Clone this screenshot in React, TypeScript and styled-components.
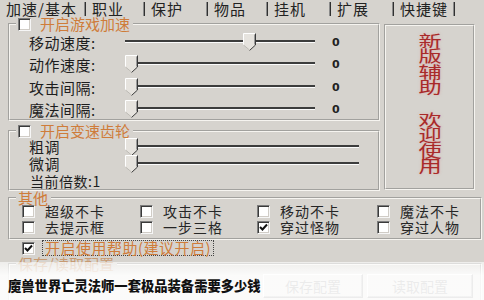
import React from "react";
import styled, { createGlobalStyle } from "styled-components";

const FONT = `"Noto Sans CJK SC", "Noto Sans", sans-serif`;

const GlobalStyle = createGlobalStyle`
  html, body {
    margin: 0;
    padding: 0;
    background: #d6d3ce;
  }
  body {
    font-family: ${FONT};
  }
`;

const Window = styled.div`
  position: relative;
  width: 484px;
  height: 300px;
  overflow: hidden;
  background: #d6d3ce;
  color: #1e1e1e;
  font-family: ${FONT};
`;

const TabBar = styled.div`
  display: flex;
  height: 17px;
`;

const Tab = styled.div<{ $w: number }>`
  position: relative;
  box-sizing: border-box;
  width: ${({ $w }) => $w}px;
  height: 17px;
  padding: 1px 0 0 6px;
  font-size: 15px;
  line-height: 16px;
  letter-spacing: 1px;
  color: #222;
  white-space: nowrap;

  &::after {
    content: "";
    position: absolute;
    right: 0;
    top: 2px;
    bottom: 1px;
    width: 1px;
    background: #303030;
    box-shadow: -1px 0 0 #8a8a8a;
  }
`;

const Body = styled.div`
  padding: 0 2px 0 8px;
`;

const Top = styled.div`
  display: flex;
  gap: 4px;
`;

const LeftCol = styled.div`
  display: flex;
  flex-direction: column;
  width: 372px;
`;

const Group = styled.fieldset<{ $mt?: number }>`
  margin: ${({ $mt }) => $mt ?? 0}px 0 0 0;
  padding: 0;
  min-width: 0;
  border: 2px groove #f6f4f0;
`;

const Legend = styled.legend<{ $muted?: boolean }>`
  display: flex;
  align-items: center;
  gap: 9px;
  margin-left: 6px;
  padding: 0 3px 0 2px;
  font-size: 15px;
  line-height: 14px;
  height: 14px;
  color: ${({ $muted }) => ($muted ? "#c79a72" : "#cf7c3a")};
  white-space: nowrap;
`;

const SliderRow = styled.div<{ $h: number; $label: number }>`
  display: flex;
  align-items: center;
  height: ${({ $h }) => $h}px;
  padding-left: 19px;

  & > span:first-child {
    width: ${({ $label }) => $label}px;
    font-size: 15px;
    letter-spacing: 0.5px;
    white-space: nowrap;
  }
`;

const PlainRow = styled.div<{ $h: number }>`
  display: flex;
  align-items: center;
  height: ${({ $h }) => $h}px;
  padding-left: 20px;
  font-size: 14px;
  letter-spacing: 0.5px;
`;

const Track = styled.div<{ $w: number }>`
  position: relative;
  width: ${({ $w }) => $w}px;
  height: 20px;

  &::before {
    content: "";
    position: absolute;
    left: 0;
    right: 0;
    top: 8px;
    height: 2px;
    background: #3c3c3c;
    border-bottom: 1px solid #fbfbfb;
  }
`;

const ThumbSvg = styled.svg`
  position: absolute;
  top: 1px;
`;

const Value = styled.span`
  margin-left: 17px;
  font-family: "DejaVu Sans", sans-serif;
  font-weight: bold;
  font-size: 11px;
  color: #222;
`;

const Banner = styled.div`
  box-sizing: border-box;
  margin-top: 7px;
  width: 91px;
  height: 166px;
  border: 2px groove #f6f4f0;
  padding-top: 7px;
  display: flex;
  flex-direction: column;
  align-items: center;
  gap: 18px;
`;

const RedWord = styled.div`
  writing-mode: vertical-rl;
  font-size: 16px;
  line-height: 16px;
  letter-spacing: -0.7px;
  color: #a82a2a;
  text-shadow: 0 0 2px rgba(230, 120, 120, 0.5);
  transform: scaleX(1.45);
`;

const CheckGrid = styled.div`
  display: grid;
  grid-template-columns: 118px 117px 120px 1fr;
  grid-auto-rows: 16px;
  padding: 0 0 3px 12px;
  margin-top: -2px;
  font-size: 14px;
  letter-spacing: 1px;
`;

const CheckItem = styled.label`
  display: flex;
  align-items: center;
  gap: 10px;
  white-space: nowrap;
  color: #262626;
`;

const Box = styled.span`
  position: relative;
  box-sizing: border-box;
  display: inline-block;
  flex: none;
  width: 13px;
  height: 13px;
  background: #fff;
  border: 1px solid;
  border-color: #7c7c7c #f6f6f6 #f6f6f6 #7c7c7c;
  box-shadow: inset 1px 1px 0 #3a3a3a, inset -1px -1px 0 #d0ccc6;

  svg {
    position: absolute;
    left: 1px;
    top: 1px;
  }
`;

const HelpRow = styled.div`
  display: flex;
  align-items: center;
  gap: 7px;
  height: 16px;
  padding-left: 14px;
`;

const FocusLabel = styled.span`
  padding: 0 2px;
  border: 1px dotted #444;
  font-size: 15px;
  line-height: 14px;
  letter-spacing: 0.5px;
  color: #cf7c3a;
  white-space: nowrap;
`;

const Buttons = styled.div`
  display: flex;
  justify-content: flex-end;
  gap: 4px;
  padding: 3px 7px 8px 0;
`;

const Button = styled.div<{ $w: number }>`
  box-sizing: border-box;
  width: ${({ $w }) => $w}px;
  height: 24px;
  border: 1px solid;
  border-color: #fff #404040 #404040 #fff;
  box-shadow: inset -1px -1px 0 #808080;
  display: flex;
  align-items: center;
  justify-content: center;
  font-size: 14px;
  color: #333;
`;

const Caption = styled.div`
  position: absolute;
  left: 0;
  right: 0;
  top: 262px;
  bottom: 0;
  display: flex;
  align-items: center;
  padding: 9px 0 0 8px;
  box-sizing: border-box;
  background: linear-gradient(rgba(255, 255, 255, 0.6), rgba(255, 255, 255, 0.9) 35%);
  font-size: 13.3px;
  font-weight: 900;
  color: #111;
  white-space: nowrap;
`;

const Check = ({ on }: { on?: boolean }) => (
  <Box>
    {on && (
      <svg width="9" height="9" viewBox="0 0 9 9">
        <polyline points="1,4 3.5,6.5 8,1.5" fill="none" stroke="#111" strokeWidth="2" />
      </svg>
    )}
  </Box>
);

const Slider = ({ w, pos }: { w: number; pos: number }) => (
  <Track $w={w}>
    <ThumbSvg width="13" height="18" viewBox="0 0 13 18" style={{ left: Math.round(pos * (w - 13)) }}>
      <polygon points="0.5,0.5 12.5,0.5 12.5,12 6.5,17.5 0.5,12" fill="#e6e3de" />
      <polyline points="0.5,12 0.5,0.5 12.5,0.5" fill="none" stroke="#ffffff" />
      <polyline points="12.5,0.5 12.5,12 6.5,17.5" fill="none" stroke="#3a3a3a" />
      <polyline points="11.5,1.5 11.5,11.5" fill="none" stroke="#9a9a9a" />
      <polyline points="6.5,17 0.5,12" fill="none" stroke="#bdbab4" />
    </ThumbSvg>
  </Track>
);

const tabs = [
  { label: "加速/基本", w: 86 },
  { label: "职业", w: 59 },
  { label: "保护", w: 63 },
  { label: "物品", w: 60 },
  { label: "挂机", w: 63 },
  { label: "扩展", w: 63 },
  { label: "快捷键", w: 61 },
];

const speedRows = [
  { label: "移动速度:", pos: 0.667, h: 22 },
  { label: "动作速度:", pos: 0, h: 22 },
  { label: "攻击间隔:", pos: 0, h: 24 },
  { label: "魔法间隔:", pos: 0, h: 20 },
];

const others = [
  { label: "超级不卡" },
  { label: "攻击不卡" },
  { label: "移动不卡" },
  { label: "魔法不卡" },
  { label: "去提示框" },
  { label: "一步三格" },
  { label: "穿过怪物", on: true },
  { label: "穿过人物" },
];

export default function App() {
  return (
    <Window>
      <GlobalStyle />
      <TabBar>
        {tabs.map((t) => (
          <Tab key={t.label} $w={t.w}>
            {t.label}
          </Tab>
        ))}
      </TabBar>
      <Body>
        <Top>
          <LeftCol>
            <Group>
              <Legend>
                <Check />
                开启游戏加速
              </Legend>
              {speedRows.map((r) => (
                <SliderRow key={r.label} $h={r.h} $label={96}>
                  <span>{r.label}</span>
                  <Slider w={190} pos={r.pos} />
                  <Value>0</Value>
                </SliderRow>
              ))}
            </Group>
            <Group $mt={3}>
              <Legend>
                <Check />
                开启变速齿轮
              </Legend>
              <SliderRow $h={17} $label={96}>
                <span>粗调</span>
                <Slider w={234} pos={0} />
              </SliderRow>
              <SliderRow $h={17} $label={96}>
                <span>微调</span>
                <Slider w={234} pos={0} />
              </SliderRow>
              <PlainRow $h={17}>当前倍数:1</PlainRow>
            </Group>
          </LeftCol>
          <Banner>
            <RedWord>新版辅助</RedWord>
            <RedWord>欢迎使用</RedWord>
          </Banner>
        </Top>
        <Group>
          <Legend>其他</Legend>
          <CheckGrid>
            {others.map((o) => (
              <CheckItem key={o.label}>
                <Check on={o.on} />
                {o.label}
              </CheckItem>
            ))}
          </CheckGrid>
        </Group>
        <HelpRow>
          <Check on />
          <FocusLabel>开启使用帮助(建议开启)</FocusLabel>
        </HelpRow>
        <Group $mt={1}>
          <Legend $muted>保存/读取配置</Legend>
          <Buttons>
            <Button $w={100}>保存配置</Button>
            <Button $w={106}>读取配置</Button>
          </Buttons>
        </Group>
      </Body>
      <Caption>魔兽世界亡灵法师一套极品装备需要多少钱</Caption>
    </Window>
  );
}
